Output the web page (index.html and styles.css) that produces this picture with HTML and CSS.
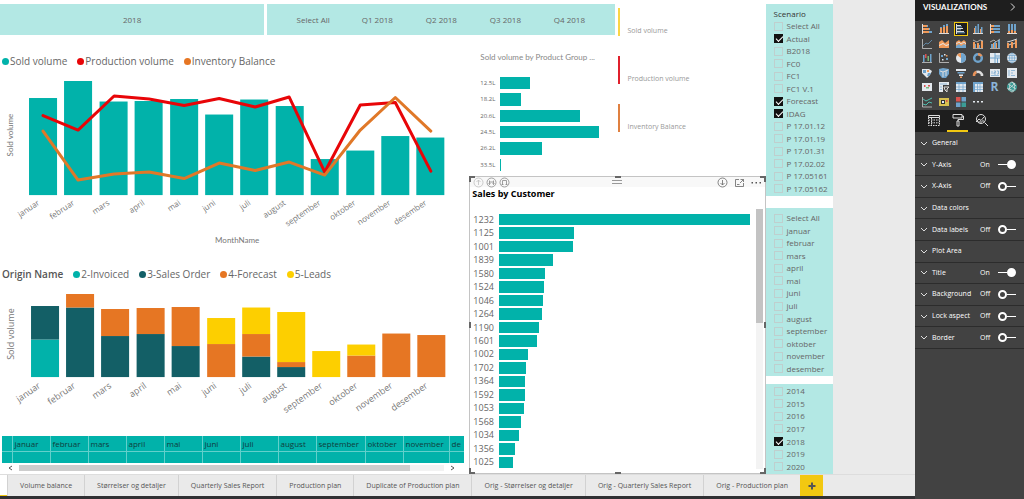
FILE: index.html
```
<!DOCTYPE html>
<html lang="en">
<head>
<meta charset="utf-8">
<title>Production plan</title>
<link rel="stylesheet" href="styles.css">
</head>
<body>
<div class="app">
<div class="workspace">
<div class="stage">
<main class="canvas">
  <div class="top-slicers">
    <div class="tiles year"><button>2018</button></div>
    <div class="tiles quarters"><button>Select All</button><button>Q1 2018</button><button>Q2 2018</button><button>Q3 2018</button><button>Q4 2018</button></div>
  </div>

  <section class="left">
    <div class="legend"><span class="key teal">Sold volume</span><span class="key red">Production volume</span><span class="key orange">Inventory Balance</span></div>
    <svg class="chart" viewBox="0 72 467 190" role="img" aria-label="Sold volume by month">
      <g fill="#01b2aa">
        <rect x="29" y="98" width="28" height="97"/><rect x="64" y="81" width="28" height="114"/><rect x="99.500" y="101.500" width="28" height="93.500"/><rect x="134.500" y="101" width="28" height="94"/><rect x="170" y="99" width="28" height="96"/><rect x="205" y="114.500" width="28" height="80.500"/><rect x="240" y="99.500" width="28" height="95.500"/><rect x="275.500" y="106" width="28" height="89"/><rect x="310.500" y="159" width="28" height="36"/><rect x="346" y="150.500" width="28" height="44.500"/><rect x="381" y="136" width="28" height="59"/><rect x="416" y="137.500" width="28" height="57.500"/>
      </g>
      <polyline class="line" stroke="#e80508" points="43,115.500 78,130 114,96 149,99 184,105.500 219,98.500 255,107 289,97 324.500,172 360,105 395,102.500 430.500,171"/>
      <polyline class="line" stroke="#e07828" points="43,131 78,180 114,174 149,172 184,178.500 219,163 255,170.500 289,162 324.500,175 360,130 395,97.500 430.500,131"/>
      <g class="ticks">
        <text transform="translate(40,204) rotate(-34)">januar</text><text transform="translate(75,204) rotate(-34)">februar</text><text transform="translate(110,204) rotate(-34)">mars</text><text transform="translate(145,204) rotate(-34)">april</text><text transform="translate(181,204) rotate(-34)">mai</text><text transform="translate(216,204) rotate(-34)">juni</text><text transform="translate(251,204) rotate(-34)">juli</text><text transform="translate(286,204) rotate(-34)">august</text><text transform="translate(321,204) rotate(-34)">september</text><text transform="translate(356,204) rotate(-34)">oktober</text><text transform="translate(391,204) rotate(-34)">november</text><text transform="translate(427,204) rotate(-34)">desember</text>
      </g>
      <text class="axis" transform="translate(13,135) rotate(-90)">Sold volume</text>
      <text class="axis" x="237" y="243">MonthName</text>
    </svg>
    <div class="legend origin"><b>Origin Name</b><span class="key teal">2-Invoiced</span><span class="key petrol">3-Sales Order</span><span class="key orange">4-Forecast</span><span class="key yellow">5-Leads</span></div>
    <svg class="chart" viewBox="0 286 467 150" role="img" aria-label="Sold volume by month and origin">
      <rect fill="#01b2aa" x="31" y="339.500" width="28" height="37.500"/>
      <g fill="#135f66"><rect x="31" y="306" width="28" height="33.500"/><rect x="66" y="307.500" width="28" height="69.500"/><rect x="101" y="336" width="28" height="41"/><rect x="136.500" y="334" width="28" height="43"/><rect x="171.500" y="346" width="28" height="31"/><rect x="242" y="356.500" width="28" height="20.500"/><rect x="277" y="367" width="28" height="10"/></g>
      <g fill="#e67623"><rect x="66" y="294" width="28" height="13.500"/><rect x="101" y="309" width="28" height="27"/><rect x="136.500" y="308" width="28" height="26"/><rect x="171.500" y="307" width="28" height="39"/><rect x="207" y="344" width="28" height="33"/><rect x="242" y="334" width="28" height="22.500"/><rect x="277" y="362" width="28" height="5"/><rect x="347" y="355.500" width="28" height="21.500"/><rect x="382" y="333.500" width="28" height="43.500"/><rect x="417" y="335" width="28" height="42"/></g>
      <g fill="#fdcf00"><rect x="207" y="318" width="28" height="26"/><rect x="242" y="307.500" width="28" height="26.500"/><rect x="277" y="312" width="28" height="50"/><rect x="312" y="351" width="28" height="26"/><rect x="347" y="344.500" width="28" height="11"/></g>
      <g class="ticks large">
        <text transform="translate(41,387) rotate(-35)">januar</text><text transform="translate(76,387) rotate(-35)">februar</text><text transform="translate(112,387) rotate(-35)">mars</text><text transform="translate(147,387) rotate(-35)">april</text><text transform="translate(182,387) rotate(-35)">mai</text><text transform="translate(217,387) rotate(-35)">juni</text><text transform="translate(252,387) rotate(-35)">juli</text><text transform="translate(287,387) rotate(-35)">august</text><text transform="translate(323,387) rotate(-35)">september</text><text transform="translate(358,387) rotate(-35)">oktober</text><text transform="translate(393,387) rotate(-35)">november</text><text transform="translate(428,387) rotate(-35)">desember</text>
      </g>
      <text class="axis large" transform="translate(14,334) rotate(-90)">Sold volume</text>
    </svg>
    <div class="matrix">
      <table>
        <colgroup><col class="c-stub"><col class="c-m"><col class="c-m"><col class="c-m"><col class="c-m"><col class="c-m"><col class="c-m"><col class="c-m"><col class="c-m"><col class="c-l"><col class="c-m"><col class="c-n"><col></colgroup>
        <thead><tr><th></th><th>januar</th><th>februar</th><th>mars</th><th>april</th><th>mai</th><th>juni</th><th>juli</th><th>august</th><th>september</th><th>oktober</th><th>november</th><th>de</th></tr></thead>
        <tbody><tr><td></td><td></td><td></td><td></td><td></td><td></td><td></td><td></td><td></td><td></td><td></td><td></td><td></td></tr></tbody>
      </table>
    </div>
    <div class="hscroll">
      <svg class="arrow" viewBox="0 0 5 6"><path d="M4 1L1 3l3 2"/></svg>
      <div class="rail"><div class="thumb"></div></div>
      <svg class="arrow" viewBox="0 0 5 6"><path d="M1 1l3 2-3 2"/></svg>
    </div>
  </section>

  <section class="groups">
    <h2>Sold volume by Product Group ...</h2>
    <div class="bars">
      <span>12.5L</span><div><i style="width:25.600%"></i></div>
      <span>18.2L</span><div><i style="width:17.600%"></i></div>
      <span>20.6L</span><div><i style="width:69%"></i></div>
      <span>24.5L</span><div><i style="width:86%"></i></div>
      <span>26.2L</span><div><i style="width:36.400%"></i></div>
      <span>33.5L</span><div><i style="width:0.900%"></i></div>
    </div>
  </section>

  <section class="cards">
    <div class="card c-yellow">Sold volume</div>
    <div class="card c-red">Production volume</div>
    <div class="card c-orange">Inventory Balance</div>
  </section>

  <section class="customers">
    <i class="h tl"></i><i class="h tc"></i><i class="h tr"></i><i class="h ml"></i><i class="h mr"></i><i class="h bl"></i><i class="h bc"></i><i class="h br"></i>
    <header>
      <div class="tools">
        <button class="dim" aria-label="Drill up"><svg viewBox="0 0 11 11"><circle cx="5.500" cy="5.500" r="4.500"/><path d="M5.500 8V3M3.500 5l2-2 2 2"/></svg></button>
        <button aria-label="Next level"><svg viewBox="0 0 11 11"><circle cx="5.500" cy="5.500" r="4.500"/><path d="M3.500 3.500v4M2.500 6.500l1 1 1-1M7.500 3.500v4M6.500 6.500l1 1 1-1M3.500 5h4"/></svg></button>
        <button aria-label="Expand all"><svg viewBox="0 0 11 11"><circle cx="5.500" cy="5.500" r="4.500"/><path d="M3.500 8V3.500h4V8M2.500 7l1 1 1-1M6.500 7l1 1 1-1"/></svg></button>
      </div>
      <div class="grip"></div>
      <div class="tools right">
        <button aria-label="Drill down"><svg viewBox="0 0 11 11"><circle cx="5.500" cy="5.500" r="4.500"/><path d="M5.500 3v5M3.500 6l2 2 2-2"/></svg></button>
        <button aria-label="Focus mode"><svg viewBox="0 0 11 11"><path d="M5 2.500H1.500v7h8V6M6.500 2.500h3v2.500M9.500 2.500L6 6M3 7.500h2.500"/></svg></button>
        <button aria-label="More options"><svg viewBox="0 0 11 11"><path class="solid" d="M.500 5h1.500v1.500H.500zM4.500 5H6v1.500H4.500zM8.500 5H10v1.500H8.500z"/></svg></button>
      </div>
    </header>
    <h2>Sales by Customer</h2>
    <div class="body">
      <div class="bars">
        <span>1232</span><div><i style="width:100%"></i></div>
        <span>1125</span><div><i style="width:30%"></i></div>
        <span>1001</span><div><i style="width:29.500%"></i></div>
        <span>1839</span><div><i style="width:21.500%"></i></div>
        <span>1580</span><div><i style="width:18.200%"></i></div>
        <span>1524</span><div><i style="width:17.900%"></i></div>
        <span>1046</span><div><i style="width:17.500%"></i></div>
        <span>1264</span><div><i style="width:17.100%"></i></div>
        <span>1190</span><div><i style="width:15.900%"></i></div>
        <span>1601</span><div><i style="width:15.200%"></i></div>
        <span>1002</span><div><i style="width:11.500%"></i></div>
        <span>1702</span><div><i style="width:10.700%"></i></div>
        <span>1364</span><div><i style="width:10.300%"></i></div>
        <span>1592</span><div><i style="width:10.200%"></i></div>
        <span>1053</span><div><i style="width:9.900%"></i></div>
        <span>1568</span><div><i style="width:8.700%"></i></div>
        <span>1034</span><div><i style="width:7.900%"></i></div>
        <span>1356</span><div><i style="width:6.300%"></i></div>
        <span>1025</span><div><i style="width:5.600%"></i></div>
      </div>
      <div class="vscroll"><div class="thumb"></div></div>
    </div>
  </section>

  <aside class="slicers">
    <fieldset class="slicer scenario"><legend>Scenario</legend>
      <div class="options">
      <label><input type="checkbox">Select All</label><label><input type="checkbox" checked>Actual</label><label><input type="checkbox">B2018</label><label><input type="checkbox">FC0</label><label><input type="checkbox">FC1</label><label><input type="checkbox">FC1 V.1</label><label><input type="checkbox" checked>Forecast</label><label><input type="checkbox" checked>IDAG</label><label><input type="checkbox">P 17.01.12</label><label><input type="checkbox">P 17.01.19</label><label><input type="checkbox">P 17.01.31</label><label><input type="checkbox">P 17.02.02</label><label><input type="checkbox">P 17.05161</label><label><input type="checkbox">P 17.05162</label>
      </div>
    </fieldset>
    <fieldset class="slicer months">
      <div class="options">
      <label><input type="checkbox">Select All</label><label><input type="checkbox">januar</label><label><input type="checkbox">februar</label><label><input type="checkbox">mars</label><label><input type="checkbox">april</label><label><input type="checkbox">mai</label><label><input type="checkbox">juni</label><label><input type="checkbox">juli</label><label><input type="checkbox">august</label><label><input type="checkbox">september</label><label><input type="checkbox">oktober</label><label><input type="checkbox">november</label><label><input type="checkbox">desember</label>
      </div>
    </fieldset>
    <fieldset class="slicer years">
      <div class="options">
      <label><input type="checkbox">2014</label><label><input type="checkbox">2015</label><label><input type="checkbox">2016</label><label><input type="checkbox">2017</label><label><input type="checkbox" checked>2018</label><label><input type="checkbox">2019</label><label><input type="checkbox">2020</label>
      </div>
    </fieldset>
  </aside>
</main>
</div>
<nav class="pages">
  <span class="current"></span>
  <button>Volume balance</button><button>Størrelser og detaljer</button><button>Quarterly Sales Report</button><button>Production plan</button><button>Duplicate of Production plan</button><button>Orig - Størrelser og detaljer</button><button>Orig - Quarterly Sales Report</button><button>Orig - Production plan</button><button class="add" aria-label="New page"><svg viewBox="0 0 8 8"><path d="M4 .500v7M.500 4h7"/></svg></button>
</nav>
</div>

<aside class="panel">
  <header><h1>VISUALIZATIONS</h1><svg viewBox="0 0 6 8"><path d="M1 .500L4.500 4 1 7.500"/></svg></header>
  <div class="gallery">
    <button aria-label="Stacked bar"><svg viewBox="0 0 12 12"><path class="w" d="M1.500 1v10"/><path class="of" d="M2 2h4v2H2zM2 5h6v2H2zM2 8h6v2H2z"/><path class="bf" d="M6 2h1v2H6zM8 5h1v2H8zM8 8h3v2H8z"/></svg></button>
    <button aria-label="Stacked column"><svg viewBox="0 0 12 12"><path class="w" d="M1 10.500h10"/><path class="of" d="M2 5h2v5H2zM5 4h2v6H5zM8 3h2v7H8z"/><path class="bf" d="M2 4h2v1H2zM5 2h2v2H5zM8 1h2v2H8z"/></svg></button>
    <button class="selected" aria-label="Clustered bar"><svg viewBox="0 0 12 12"><path class="w" d="M1.500 1v10M2 2.500h4M2 5.500h6M2 8.500h7"/><path class="b" d="M2 3.800h5M2 6.800h4M2 9.800h8"/></svg></button>
    <button aria-label="Clustered column"><svg viewBox="0 0 12 12"><path class="w" d="M1 10.500h10"/><path class="of" d="M2 5h1v5H2zM8 6h1v4H8z"/><path class="bf" d="M3 3h1.500v7H3zM5.500 1H7v9H5.500zM9 4h1.500v6H9z"/></svg></button>
    <button aria-label="100% stacked bar"><svg viewBox="0 0 12 12"><path class="w" d="M1.500 1v10"/><path class="of" d="M2 2h3v2H2zM2 5h2v2H2zM2 8h3v2H2z"/><path class="bf" d="M5 2h6v2H5zM4 5h7v2H4zM5 8h6v2H5z"/></svg></button>
    <button aria-label="100% stacked column"><svg viewBox="0 0 12 12"><path class="w" d="M1 10.500h10"/><path class="of" d="M2 8h2v2H2zM5 7h2v3H5zM8 8h2v2H8z"/><path class="bf" d="M2 1h2v7H2zM5 1h2v6H5zM8 1h2v7H8z"/></svg></button>

    <button aria-label="Line"><svg viewBox="0 0 12 12"><path class="w thin" d="M1.500 1v9.500H11"/><path class="b thin" d="M2 8l3-3 2 1 4-4"/></svg></button>
    <button aria-label="Area"><svg viewBox="0 0 12 12"><path class="of" d="M1 4l3-2 3 3 4-3v8H1z"/><path class="wf" d="M1 7l4-2 3 2 3-1v1L8 8 5 6 1 8z"/></svg></button>
    <button aria-label="Stacked area"><svg viewBox="0 0 12 12"><path class="of" d="M1 4l3-2 2 2 3-2 2 2v6H1z"/><path class="bf" d="M1 8l3-2 2 2 3-2 2 1v3H1z"/><path class="w" d="M1 6l3-2 2 2 3-2 2 2"/></svg></button>
    <button aria-label="Line and stacked column"><svg viewBox="0 0 12 12"><path class="of" d="M1 4h2v6H1zM5 5h2v5H5zM9 3h2v7H9z"/><path class="w thin" d="M1 10.500h10M1 2l4 2 3-2 3 1"/><path class="bf" d="M3 6h1v4H3zM7 7h1v3H7z"/></svg></button>
    <button aria-label="Line and clustered column"><svg viewBox="0 0 12 12"><path class="bf" d="M2 6h2v4H2zM5 4h2v6H5zM9 2h2v8H9z"/><path class="of" d="M4 5h1v5H4zM7 5h1v5H7z"/><path class="w thin" d="M1 10.500h10M1 4l4-2 2 2 4-3"/></svg></button>
    <button aria-label="Ribbon"><svg viewBox="0 0 12 12"><path class="of" d="M1 5h2v5H1zM5 4h2v6H5zM9 2h2v8H9z"/><path class="w" d="M1 4l4-1 3-1 3-1M3 7l2-1M7 6l2-1"/></svg></button>

    <button aria-label="Waterfall"><svg viewBox="0 0 12 12"><path class="w thin" d="M1 10.500h10"/><path class="bf" d="M2 3h1.500v7H2zM9 2h1.500v8H9z"/><path class="rf" d="M4 2h1.500v4H4z"/><path class="gf" d="M6.500 4H8v5H6.500z"/></svg></button>
    <button aria-label="Scatter"><svg viewBox="0 0 12 12"><path class="w thin" d="M1.500 1v9.500H11"/><path class="bf" d="M3 3h2v2H3zM8 6h2v2H8z"/><path class="wf" d="M6 2h1.500v1.500H6zM4 7h1.500v1.500H4z"/><path class="of" d="M8 3h1.500v1.500H8z"/></svg></button>
    <button aria-label="Pie"><svg viewBox="0 0 12 12"><circle class="wf" cx="6" cy="6" r="5"/><path class="bf" d="M6 6V1a5 5 0 0 1 0 10z"/><path class="of" d="M6 6V1a5 5 0 0 0-4 2z"/></svg></button>
    <button aria-label="Donut"><svg viewBox="0 0 12 12"><circle class="b fat" cx="6" cy="6" r="3.800"/><path class="o fat" d="M6 2.200a3.800 3.800 0 0 1 3.400 2"/></svg></button>
    <button aria-label="Treemap"><svg viewBox="0 0 12 12"><path class="wf" d="M1 1h10v10H1z"/><path class="b" d="M6 1v10M1 6h10M6 4h5M8.500 6v5"/></svg></button>
    <button aria-label="Map"><svg viewBox="0 0 12 12"><circle class="wf" cx="6" cy="6" r="5"/><path class="b thin" d="M1 6h10M6 1v10M2 3.500h8M2 8.500h8"/><ellipse class="b thin" cx="6" cy="6" rx="2.500" ry="5"/></svg></button>

    <button aria-label="Filled map"><svg viewBox="0 0 12 12"><path class="wf" d="M1 2h7l3 2-2 4-3 3-3-3-2-2z"/><path class="bf" d="M2 3h3v3H2zM7 6h3L8 9H6z"/><path class="of" d="M6 3h2v2H6z"/></svg></button>
    <button aria-label="Shape map"><svg viewBox="0 0 12 12"><path class="bf" d="M1 2l4-1 6 1v5l-3 4H4L1 7z"/><path class="w" d="M2 4l3 1 5-2M5 5v5M8 4v5"/></svg></button>
    <button aria-label="Funnel"><svg viewBox="0 0 12 12"><path class="wf" d="M1 2h10v2H1z"/><path class="bf" d="M2.500 5h7v1.500h-7z"/><path class="wf" d="M4 7.500h4V9H4z"/><path class="of" d="M5 9.500h2V11H5z"/></svg></button>
    <button aria-label="Gauge"><svg viewBox="0 0 12 12"><path class="o fat" d="M2 9a4 4 0 0 1 2.500-4"/><path class="w fat" d="M4.500 5A4 4 0 0 1 10 9"/></svg></button>
    <button aria-label="Card"><svg viewBox="0 0 12 12"><path class="wf" d="M1 2h10v8H1z"/><path class="b thin" d="M3 4v3M5 4h1.500v1.500H5V7h2M8 4h1.500v3H8M2 8.500h8"/></svg></button>
    <button aria-label="Multi-row card"><svg viewBox="0 0 12 12"><path class="wf" d="M1 1h10v10H1z"/><path class="b thin" d="M3 3v6M5 3.500h4M5 6h2M5 8.500h4"/></svg></button>

    <button aria-label="KPI"><svg viewBox="0 0 12 12"><path class="wf" d="M1 2h10v8H1z"/><path class="rf" d="M3 4h1.500v2H3zM7 4h2v1.500H7z"/><path class="gf" d="M5 6h3v1.500H5z"/></svg></button>
    <button aria-label="Slicer"><svg viewBox="0 0 12 12"><path class="wf" d="M1 1h10v3H5v7H1z"/><path class="b thin" d="M2 3h7M2 6h2M2 8.500h2"/><path class="w" d="M6 6h5L9 8v3L7 9z"/></svg></button>
    <button aria-label="Table"><svg viewBox="0 0 12 12"><path class="wf" d="M1 1h10v10H1z"/><path class="bf" d="M1 1h10v2H1z"/><path class="b thin" d="M4 3v8M8 3v8M1 6h10M1 8.500h10"/></svg></button>
    <button aria-label="Matrix"><svg viewBox="0 0 12 12"><path class="wf" d="M1 1h10v10H1z"/><path class="bf" d="M1 1h10v2H1zM1 3h2v8H1z"/><path class="b thin" d="M5.500 3v8M8 3v8M1 6h10M1 8.500h10"/></svg></button>
    <button class="letter" aria-label="R script visual">R</button>
    <button aria-label="ArcGIS map"><svg viewBox="0 0 12 12"><circle class="tf" cx="6" cy="6" r="5"/><path class="w thin" d="M2 3l8 5M1 7l7 3M6 1l4 4M2 9l7-7"/><ellipse class="w thin" cx="6" cy="6" rx="2.500" ry="5"/></svg></button>

    <button aria-label="Sparkline"><svg viewBox="0 0 12 12"><path class="w thin" d="M1.500 1v10H11"/><path class="t" d="M2 3l3 2 2-1 4-2M2 8l3 1 3-3 3 1"/></svg></button>
    <button aria-label="Bullet chart"><svg viewBox="0 0 12 12"><path class="yf" d="M1 2h10v8H1z"/><path class="kf" d="M3 4h4v4H3z"/><path class="rf" d="M8 4h1.500v2H8z"/><path class="wf" d="M4 5h2v2H4z"/></svg></button>
    <button aria-label="Tiles"><svg viewBox="0 0 12 12"><path class="rf" d="M1 1h4.500v4.500H1z"/><path class="bf" d="M6.500 1H11v4.500H6.500zM1 6.500h4.500V11H1z"/><path class="tf" d="M6.500 6.500H11V11H6.500z"/></svg></button>
    <button aria-label="More visuals"><svg viewBox="0 0 12 12"><path class="wf" d="M1 5h2v1.500H1zM5 5h2v1.500H5zM9 5h2v1.500H9z"/></svg></button>
  </div>
  <div class="modes">
    <button aria-label="Fields"><svg viewBox="0 0 14 14"><path d="M1.500 2.500h11v2h-11z"/><path stroke-dasharray="1.500 1" d="M1.500 4.500v8h11v-8M1.500 7h11M1.500 9.800h11M4.500 5v7"/></svg></button>
    <button class="active" aria-label="Format"><svg viewBox="0 0 14 14"><path d="M2 1.500h9v3.500H2zM11 3h1.500v3.500H7V8M6 8h2v5H6z"/></svg></button>
    <button aria-label="Analytics"><svg viewBox="0 0 14 14"><circle cx="6" cy="6" r="4.500"/><path d="M9.500 9.500l3.500 3.500M1 9l3-3 2 1.500L9 4M4 8v2M6 8v2M8 7v2"/></svg></button>
  </div>
  <div class="props">
    <div class="prop"><button><svg viewBox="0 0 8 5"><path d="M1 1l3 3 3-3"/></svg>General</button></div>
    <div class="prop"><button><svg viewBox="0 0 8 5"><path d="M1 1l3 3 3-3"/></svg>Y-Axis</button><label>On<input type="checkbox" role="switch" checked></label></div>
    <div class="prop"><button><svg viewBox="0 0 8 5"><path d="M1 1l3 3 3-3"/></svg>X-Axis</button><label>Off<input type="checkbox" role="switch"></label></div>
    <div class="prop"><button><svg viewBox="0 0 8 5"><path d="M1 1l3 3 3-3"/></svg>Data colors</button></div>
    <div class="prop"><button><svg viewBox="0 0 8 5"><path d="M1 1l3 3 3-3"/></svg>Data labels</button><label>Off<input type="checkbox" role="switch"></label></div>
    <div class="prop"><button><svg viewBox="0 0 8 5"><path d="M1 1l3 3 3-3"/></svg>Plot Area</button></div>
    <div class="prop"><button><svg viewBox="0 0 8 5"><path d="M1 1l3 3 3-3"/></svg>Title</button><label>On<input type="checkbox" role="switch" checked></label></div>
    <div class="prop"><button><svg viewBox="0 0 8 5"><path d="M1 1l3 3 3-3"/></svg>Background</button><label>Off<input type="checkbox" role="switch"></label></div>
    <div class="prop"><button><svg viewBox="0 0 8 5"><path d="M1 1l3 3 3-3"/></svg>Lock aspect</button><label>Off<input type="checkbox" role="switch"></label></div>
    <div class="prop"><button><svg viewBox="0 0 8 5"><path d="M1 1l3 3 3-3"/></svg>Border</button><label>Off<input type="checkbox" role="switch"></label></div>
  </div>
</aside>
</div>
</body>
</html>
```

FILE: styles.css
```
* { box-sizing: border-box; }
body { margin: 0; font: 8px/12px "Open Sans", "Noto Sans", sans-serif; color: #666; }
button { border: 0; padding: 0; margin: 0; background: none; font: inherit; color: inherit; }
h1, h2 { margin: 0; }
svg { display: block; fill: none; }

.app { display: flex; height: 100vh; }
.workspace { flex: 1; min-width: 0; display: flex; flex-direction: column; border-bottom: 3px solid #303033; }
.stage { flex: 1; min-height: 0; background: #eaeaea; }
.canvas {
  width: 91%; height: 100%; background: #fff; display: grid;
  grid-template-columns: minmax(0, 469fr) minmax(0, 146fr) minmax(0, 150fr) minmax(0, 67fr);
  grid-template-rows: 50px 126px minmax(0, 1fr);
}

.top-slicers { grid-area: 1 / 1 / 2 / 3; display: flex; gap: 3px; padding: 4px 0 15px; }
.tiles { display: flex; background: #b3e8e4; }
.tiles button { flex: 1; }
.year { flex: 264; }
.quarters { flex: 320; padding: 0 14px; }

.left { grid-area: 2 / 1 / 4 / 2; display: flex; flex-direction: column; padding-right: 2px; }
.legend { display: flex; align-items: center; gap: 10px; height: 22px; padding-left: 2px; font-size: 10px; white-space: nowrap; }
.origin { height: 24px; }
.legend b { font-weight: 600; color: #555; }
.key { display: flex; align-items: center; gap: 1px; }
.key::before { content: ""; width: 7px; height: 7px; border-radius: 50%; background: currentColor; }
.teal::before { background: #01b2aa; }
.red::before { background: #e80508; }
.orange::before { background: #e67623; }
.petrol::before { background: #135f66; }
.yellow::before { background: #fdcf00; }
.chart { width: 100%; height: auto; }
.line { stroke-width: 3; stroke-linejoin: round; stroke-linecap: round; }
.ticks { fill: #777; font-size: 8px; text-anchor: end; }
.axis { fill: #777; font: 8px Lato, sans-serif; text-anchor: middle; }
.ticks.large { font-size: 9px; }
.axis.large { font: 9px "Open Sans", sans-serif; }

.matrix { margin: 0 3px 0 2px; background: #01b2aa; }
table { table-layout: fixed; width: 100%; border-collapse: collapse; color: #103c3b; }
.c-stub { width: 10px; } .c-m { width: 38px; } .c-l { width: 49px; } .c-n { width: 46px; }
th, td { padding: 0 0 0 2px; border-right: 1px solid #62d0cb; font-weight: 400; text-align: left; line-height: 12px; }
th { height: 15px; border-bottom: 1px solid #62d0cb; }
th:last-child, td:last-child { border-right: 0; }
th:first-child, td:first-child { padding: 0; }
td { height: 12px; }
.hscroll { display: flex; align-items: center; gap: 6px; height: 10px; padding: 0 12px 0 8px; }
.arrow { width: 5px; height: 6px; stroke: #555; }
.rail { flex: 1; background: #f2f2f2; }
.rail .thumb { width: 92%; height: 6px; background: #cdcdcd; }

.groups { grid-area: 2 / 2; padding-left: 11px; display: flex; flex-direction: column; }
.groups h2 { font: 8px/14px Lato, sans-serif; color: #888; white-space: nowrap; }
.bars { display: grid; grid-auto-rows: 1fr; align-items: stretch; }
.bars span { align-self: center; }
.bars div { display: flex; }
.bars i { background: #01b2aa; }
.groups .bars { flex: 1; grid-template-columns: 20px 1fr; padding: 11px 0 3px; font: 6px/8px "Open Sans", sans-serif; }
.groups .bars div { padding: 2px 0; }

.cards { grid-area: 1 / 3 / 3 / 4; padding: 8px 0 0 3px; display: flex; flex-direction: column; gap: 20px; font: 7px/8px "Open Sans", sans-serif; color: #999; }
.card { height: 28px; padding: 19px 0 0 7px; border-left: 2px solid; }
.c-yellow { border-color: #fbd545; }
.c-red { border-color: #e0202c; }
.c-orange { border-color: #e08040; }

.customers { grid-area: 3 / 2 / 4 / 4; position: relative; display: flex; flex-direction: column; border: 1px solid #c4c4c4; background: #fff; }
.customers header { display: flex; justify-content: space-between; align-items: center; height: 10px; padding: 0 3px; background: #f8f8f8; }
.tools { display: flex; gap: 2px; flex: 1; }
.tools.right { justify-content: flex-end; gap: 6px; }
.tools svg { width: 11px; height: 11px; stroke: #888; stroke-width: .8; }
.tools.right svg { stroke: #666; }
.tools .solid { fill: #555; stroke: none; }
.dim { opacity: .5; }
.grip { width: 10px; height: 4px; border: solid #999; border-width: 1px 0; }
.customers h2 { padding-left: 2px; font: 700 9px/14px "Open Sans", sans-serif; color: #000; }
.customers .body { flex: 1; min-height: 0; display: flex; gap: 6px; padding: 8px 2px 4px 3px; }
.customers .bars { flex: 1; grid-template-columns: 26px 1fr; padding-top: 4px; font: 9px/12px "Open Sans", sans-serif; }
.customers .bars div { padding: 1px 0; }
.vscroll { width: 7px; background: #f3f3f3; }
.vscroll .thumb { height: 44%; background: #c3c3c3; }
.h { position: absolute; border: 0 solid #666; width: 6px; height: 6px; }
.tl { left: -1px; top: -1px; border-width: 2px 0 0 2px; }
.tr { right: -1px; top: -1px; border-width: 2px 2px 0 0; }
.bl { left: -1px; bottom: -1px; border-width: 0 0 2px 2px; }
.br { right: -1px; bottom: -1px; border-width: 0 2px 2px 0; }
.tc { left: 49%; top: -1px; border-top-width: 2px; }
.bc { left: 49%; bottom: -1px; border-bottom-width: 2px; }
.ml { left: -1px; top: 49%; border-left-width: 2px; }
.mr { right: -1px; top: 49%; border-right-width: 2px; }

.slicers { grid-area: 1 / 4 / 4 / 5; display: flex; flex-direction: column; padding-top: 4px; min-height: 0; }
.slicer { margin: 0; border: 0; min-width: 0; padding: 0 0 1px 8px; background: #b3e8e4; display: flex; flex-direction: column; min-height: 0; }
.slicer legend { float: left; padding: 4px 0 0; color: #333; font-size: 8px; line-height: 12px; }
.scenario { height: 192px; flex: none; }
.months { height: 168px; flex: none; padding-top: 4px; margin: 12px 0 8px; }
.years { flex: 1; padding-top: 1px; }
.options { flex: 1; display: grid; grid-auto-rows: 1fr; }
.options label { display: flex; align-items: center; gap: 4px; line-height: 12px; white-space: nowrap; }
.options input { appearance: none; margin: 0; width: 9px; height: 9px; border: 1px solid #bfcfce; flex: none; }
.options input:checked { border-color: #111; background: #111; }
.options input:checked::before { content: ""; display: block; width: 6px; height: 3px; margin: 1px 0 0 1px; border: solid #fff; border-width: 0 0 1px 1px; transform: rotate(-45deg); }

.pages { display: flex; height: 22px; background: #eaeaea; font: 7px/12px "Open Sans", sans-serif; border-top: 1px solid #ddd; overflow: hidden; }
.current { width: 7px; background: #fff; border-bottom: 1px solid #f2c811; }
.pages button { padding: 0 12px; border-left: 1px solid #d2d2d2; white-space: nowrap; color: #555; }
.pages .add { width: 23px; padding: 0 8px; border: 0; background: #f2c811; }
.add svg { width: 8px; height: 8px; stroke: #555; stroke-width: 2; }

.panel { width: 109px; flex: none; background: #424242; color: #fff; }
.panel > header { display: flex; justify-content: space-between; align-items: center; height: 21px; padding: 0 8px 8px; background: #1e1e1e; }
.panel h1 { font: 700 8px/12px Lato, sans-serif; }
.panel header svg { width: 6px; height: 8px; stroke: #ddd; }
.gallery { display: grid; grid-template-columns: repeat(6, 1fr); height: 89px; grid-auto-rows: 1fr; padding: 1px 4px 1px 3px; place-items: center; }
.gallery svg { width: 12px; height: 12px; }
.gallery button { padding: 1px; }
.gallery .selected { border: 1px solid #f2c811; padding: 0; background: #1e1e1e; }
.gallery .letter { font: 700 12px/12px "Open Sans", sans-serif; color: #8ab4d8; }
.w { stroke: #ddd; } .b { stroke: #6fa3cc; } .o { stroke: #e8935a; } .t { stroke: #4fbcae; }
.thin { stroke-width: .7; } .fat { stroke-width: 2.500; }
.wf { fill: #e4e9ee; } .bf { fill: #6fa3cc; } .of { fill: #f09a5a; } .rf { fill: #d9534f; } .gf { fill: #7ab87a; } .tf { fill: #3b9c96; } .yf { fill: #d8c050; } .kf { fill: #333; }
.modes { display: flex; height: 22px; padding-left: 8px; gap: 3px; background: #1e1e1e; }
.modes button { width: 21px; display: grid; place-items: center; border-bottom: 2px solid transparent; }
.modes .active { border-color: #f2c811; }
.modes svg { width: 14px; height: 14px; stroke: #ddd; }
.props { padding-top: 1px; display: grid; grid-auto-rows: minmax(0, 1fr); height: 217px; }
.prop { display: flex; justify-content: space-between; align-items: center; padding: 0 8px 0 5px; border-bottom: 1px solid #2c2c2c; font: 7px/12px "Open Sans", sans-serif; }
.prop button { display: flex; align-items: center; gap: 4px; white-space: nowrap; }
.prop svg { width: 8px; height: 5px; stroke: #ddd; }
.prop label { display: flex; align-items: center; justify-content: space-between; width: 36px; }
.prop input { appearance: none; margin: 0; width: 18px; height: 9px; display: flex; align-items: center; }
.prop input::before { content: ""; box-sizing: border-box; width: 9px; height: 9px; border: 2px solid #fff; border-radius: 50%; }
.prop input::after { content: ""; flex: 1; height: 1px; background: #fff; }
.prop input:checked { flex-direction: row-reverse; }
.prop input:checked::before { background: #fff; }
```
